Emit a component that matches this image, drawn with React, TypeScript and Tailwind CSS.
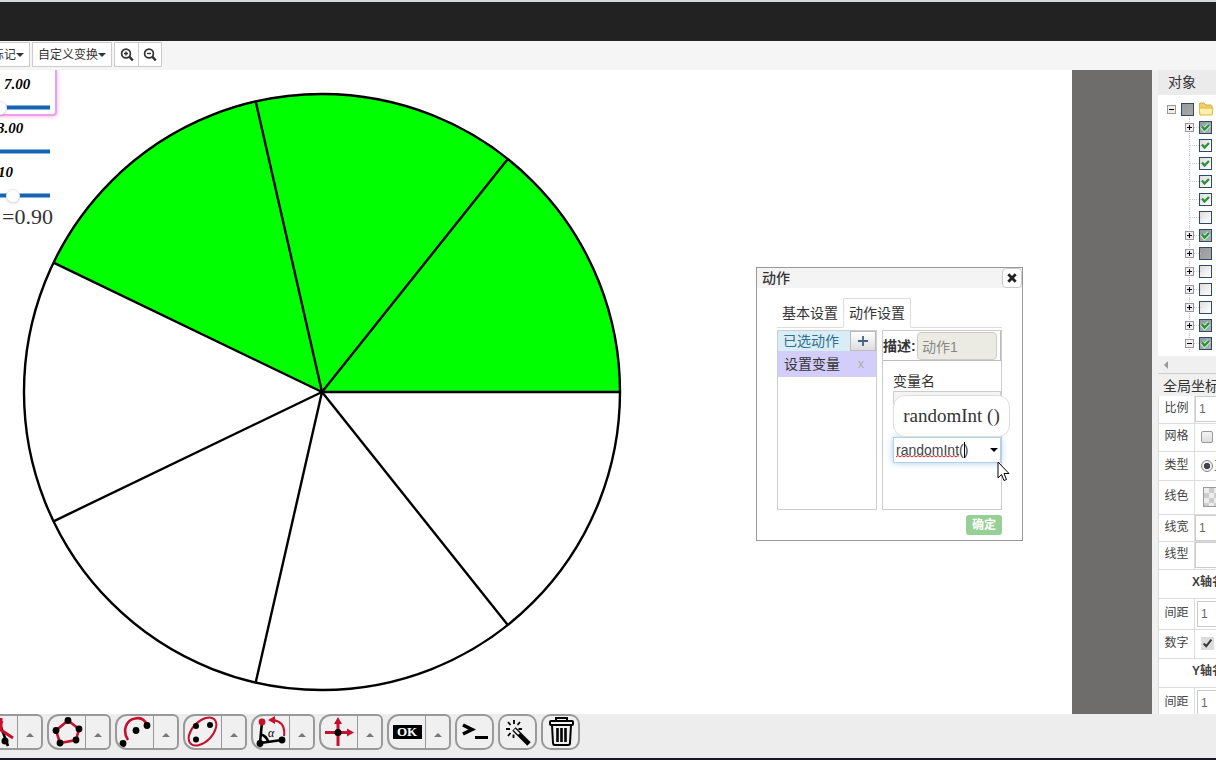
import type { ReactNode } from "react";

type NodeState = "checked" | "partial" | "mixed" | "empty";

interface TreeNode {
  state: NodeState;
  toggle?: "+" | "-";
}

const NODES: TreeNode[] = [
  { state: "mixed", toggle: "+" },
  { state: "checked" },
  { state: "checked" },
  { state: "checked" },
  { state: "checked" },
  { state: "empty" },
  { state: "mixed", toggle: "+" },
  { state: "partial", toggle: "+" },
  { state: "empty", toggle: "+" },
  { state: "empty", toggle: "+" },
  { state: "empty", toggle: "+" },
  { state: "mixed", toggle: "+" },
  { state: "mixed", toggle: "-" },
];

const CX = 322;
const CY = 322;
const R = 298;
const SLICES = 7;
const FILLED = 3;

function pointAt(index: number) {
  const angle = (2 * Math.PI * index) / SLICES;
  return { x: CX + R * Math.cos(angle), y: CY - R * Math.sin(angle) };
}

function PieChart() {
  const end = pointAt(FILLED);
  return (
    <svg className="absolute left-0 top-0" width="640" height="640" aria-hidden="true">
      <path d={`M${CX} ${CY} L${CX + R} ${CY} A${R} ${R} 0 0 0 ${end.x} ${end.y} Z`} fill="#00ff00" />
      <g fill="none" stroke="#000" strokeWidth="2.4">
        <circle cx={CX} cy={CY} r={R} />
        {Array.from({ length: SLICES }, (_, i) => {
          const p = pointAt(i);
          return <line key={i} x1={CX} y1={CY} x2={p.x} y2={p.y} />;
        })}
      </g>
    </svg>
  );
}

function Caret({ up = false, className = "" }: { up?: boolean; className?: string }) {
  return (
    <svg width="8" height="4" viewBox="0 0 8 4" className={className} aria-hidden="true">
      <path d={up ? "M0 4 4 0 8 4Z" : "M0 0H8L4 4Z"} fill="currentColor" />
    </svg>
  );
}

function ZoomIcon({ plus = false }: { plus?: boolean }) {
  return (
    <svg width="14" height="14" viewBox="0 0 14 14" fill="none" stroke="#333" aria-hidden="true">
      <circle cx="6" cy="5.5" r="4.4" strokeWidth="1.7" />
      <path d="M9.2 8.7 12.8 12.3" strokeWidth="2.4" />
      <path d={plus ? "M4 5.5H8M6 3.5V7.5" : "M4 5.5H8"} strokeWidth="1.4" />
    </svg>
  );
}

interface ParamSliderProps {
  label: string;
  text: string;
  value: number;
  textClass: string;
}

function ParamSlider({ label, text, value, textClass }: ParamSliderProps) {
  return (
    <div className="relative h-11 w-[100px]">
      <span
        className={`absolute top-1 font-['Liberation_Serif',serif] text-[15px] leading-5 font-bold italic text-black ${textClass}`}
      >
        {text}
      </span>
      <input
        type="range"
        aria-label={label}
        defaultValue={value}
        className="absolute left-0 top-[30px] h-3.5 w-full appearance-none bg-transparent [&::-webkit-slider-runnable-track]:h-[5px] [&::-webkit-slider-runnable-track]:border-y [&::-webkit-slider-runnable-track]:border-[#7fb2e5] [&::-webkit-slider-runnable-track]:bg-[#1c62b0] [&::-webkit-slider-thumb]:-mt-[5px] [&::-webkit-slider-thumb]:size-3.5 [&::-webkit-slider-thumb]:appearance-none [&::-webkit-slider-thumb]:rounded-full [&::-webkit-slider-thumb]:border [&::-webkit-slider-thumb]:border-gray-200 [&::-webkit-slider-thumb]:bg-white [&::-webkit-slider-thumb]:shadow"
      />
    </div>
  );
}

function ActionDialog() {
  return (
    <section
      aria-label="动作"
      className="absolute left-[756px] top-[197px] w-[267px] border border-[#999] bg-white text-sm text-[#333]"
    >
      <header className="flex h-5 items-center justify-between bg-[#f4f4f4] pl-[5px]">
        <h2 className="font-medium leading-5">动作</h2>
        <button
          type="button"
          aria-label="关闭"
          className="flex size-5 items-center justify-center rounded border border-[#ccc] bg-white"
        >
          <svg width="10" height="10" viewBox="0 0 10 10" aria-hidden="true">
            <path d="M1.3 1.3 8.7 8.7M8.7 1.3 1.3 8.7" stroke="#222" strokeWidth="2.8" />
          </svg>
        </button>
      </header>
      <div className="px-5 pt-2.5 pb-[5px]">
        <div role="tablist" className="flex h-[30px] border-b border-[#ddd]">
          <button type="button" role="tab" aria-selected="false" className="h-[30px] w-[66px]">
            基本设置
          </button>
          <button
            type="button"
            role="tab"
            aria-selected="true"
            className="h-[30px] w-[68px] border border-b-white border-[#ddd] bg-white"
          >
            动作设置
          </button>
        </div>
        <div className="mt-0.5 flex h-[180px] gap-[5px]">
          <div className="w-[100px] border border-[#ccc]">
            <div className="flex h-5 bg-[#d9edf7] text-[#31708f]">
              <span className="flex-1 pl-[5px] leading-5">已选动作</span>
              <button
                type="button"
                aria-label="添加动作"
                className="flex w-[26px] items-center justify-center border border-[#bbb] bg-linear-to-b from-white to-[#ddd]"
              >
                <svg width="10" height="10" viewBox="0 0 10 10" aria-hidden="true">
                  <path d="M0 5H10M5 0V10" stroke="#3c6487" strokeWidth="1.8" />
                </svg>
              </button>
            </div>
            <div className="flex h-[26px] items-center justify-between bg-[#d3cdfa] pl-1.5 pr-3">
              <span>设置变量</span>
              <button type="button" aria-label="删除" className="text-xs text-[#aaa]">
                x
              </button>
            </div>
          </div>
          <div className="w-[120px] border border-[#ccc]">
            <div className="flex h-[30px] items-center border-b border-r border-[#bbb] pr-[3px]">
              <label htmlFor="action-desc" className="w-[34px] shrink-0 whitespace-nowrap font-bold">
                描述:
              </label>
              <input
                id="action-desc"
                defaultValue="动作1"
                disabled
                className="h-7 w-full min-w-0 rounded border border-[#ccc] bg-[#ebebe4] px-1 text-[#888]"
              />
            </div>
            <div className="pl-2.5 pt-2.5">
              <label htmlFor="variable-name" className="block leading-5">
                变量名
              </label>
              <input id="variable-name" className="h-6 w-full border border-[#ccc] bg-[#f4f4f4]" />
              <div className="relative mt-[22px]">
                <input
                  aria-label="变量值"
                  defaultValue="randomInt()"
                  className="h-[26px] w-full border border-[#b5cfe4] px-0.5 text-[#444] shadow-[0_0_7px_#a5cff0] outline-none"
                />
                <svg className="absolute left-[3px] top-[18px]" width="63" height="3" aria-hidden="true">
                  <path
                    d={"M0 2" + Array.from({ length: 16 }, () => "l2-1.5l2 1.5").join("")}
                    fill="none"
                    stroke="#d22"
                  />
                </svg>
                <span className="absolute left-[71px] top-[5px] h-4 w-px bg-black" />
                <Caret className="absolute right-[3px] top-[11px] text-black" />
                <output className="absolute -top-[42px] left-0 h-[42px] w-[117px] rounded-xl border border-[#ddd] bg-white text-center font-['Liberation_Serif',serif] text-[19px] leading-10">
                  randomInt ()
                </output>
              </div>
            </div>
          </div>
        </div>
        <div className="mt-[5px] flex justify-end">
          <button type="button" className="h-5 w-9 rounded-[3px] bg-[#96d096] text-xs font-bold text-white">
            确定
          </button>
        </div>
      </div>
    </section>
  );
}

interface ToolGroupProps {
  name: string;
  children: ReactNode;
  className?: string;
}

function ToolGroup({ name, children, className = "" }: ToolGroupProps) {
  return (
    <div
      className={`flex h-9 w-16 shrink-0 overflow-hidden rounded-l-xl rounded-r-md border-2 border-[#999] bg-[#f0f0f0] ${className}`}
    >
      <button
        type="button"
        aria-label={name}
        className="flex w-[37px] items-center justify-center border-r border-[#999]"
      >
        {children}
      </button>
      <button type="button" aria-label={`${name}菜单`} className="flex flex-1 items-center justify-center pt-1.5">
        <Caret up className="text-[#777]" />
      </button>
    </div>
  );
}

function ToolButton({ name, children }: { name: string; children: ReactNode }) {
  return (
    <button
      type="button"
      aria-label={name}
      className="flex h-9 w-[39px] shrink-0 items-center justify-center rounded-[10px] border-2 border-[#999] bg-[#f0f0f0]"
    >
      {children}
    </button>
  );
}

function BottomTools() {
  return (
    <footer className="flex h-[46px] shrink-0 gap-1 overflow-hidden border-b-2 border-[#181820] bg-[#ededed]">
      <ToolGroup name="点" className="-ml-[21px]">
        <svg width="32" height="32" viewBox="0 0 32 32" aria-hidden="true">
          <path d="M18 11 25 30" stroke="#000" strokeWidth="2.6" />
          <path d="M18 2V14L30 22M19 5 11 26" stroke="#c8102e" strokeWidth="3" fill="none" />
          <circle cx="22" cy="25" r="3.5" />
        </svg>
      </ToolGroup>
      <ToolGroup name="多边形">
        <svg width="32" height="32" viewBox="0 0 32 32" aria-hidden="true">
          <path d="M17 4.500 28 13 25 24 9 27 5 14.500Z" stroke="#c8102e" strokeWidth="2.6" fill="none" />
          <circle cx="17" cy="4.500" r="3.400" />
          <circle cx="28" cy="13" r="3.400" />
          <circle cx="25" cy="24" r="3.400" />
          <circle cx="9" cy="27" r="3.400" />
          <circle cx="5" cy="14.500" r="3.400" />
        </svg>
      </ToolGroup>
      <ToolGroup name="圆弧">
        <svg width="32" height="32" viewBox="0 0 32 32" aria-hidden="true">
          <path d="M9 24C3 15 7 4 16 2.500C22 1 26 4 28 9" stroke="#c8102e" strokeWidth="2.6" fill="none" />
          <circle cx="28" cy="9.500" r="3.400" />
          <circle cx="17" cy="14.500" r="3.400" />
          <circle cx="4" cy="27.500" r="3.400" />
        </svg>
      </ToolGroup>
      <ToolGroup name="椭圆">
        <svg width="32" height="32" viewBox="0 0 32 32" aria-hidden="true">
          <ellipse
            cx="15.500"
            cy="15.500"
            rx="17"
            ry="10"
            transform="rotate(-46 15.500 15.500)"
            stroke="#c8102e"
            strokeWidth="2"
            fill="none"
          />
          <circle cx="9" cy="10" r="3" />
          <circle cx="23" cy="9" r="3" />
          <circle cx="9" cy="23.500" r="3" />
        </svg>
      </ToolGroup>
      <ToolGroup name="变换">
        <svg width="32" height="32" viewBox="0 0 32 32" aria-hidden="true">
          <path d="M7 6 5 27 27 24M5 18Q12 20 13 26" stroke="#000" strokeWidth="2.6" fill="none" />
          <circle cx="5" cy="27.500" r="3.400" />
          <circle cx="27" cy="24" r="3.400" />
          <circle cx="7" cy="6" r="3.400" fill="#c8102e" />
          <path d="M18 4Q31 6 29 20" stroke="#c8102e" strokeWidth="2" fill="none" />
          <path d="M13 4 20 0V8Z" fill="#c8102e" />
          <text x="13" y="21" fontSize="12" fontStyle="italic" fontFamily="Liberation Serif">
            α
          </text>
        </svg>
      </ToolGroup>
      <ToolGroup name="坐标系">
        <svg width="32" height="32" viewBox="0 0 32 32" aria-hidden="true">
          <path d="M2 16.500H26M15 30V6" stroke="#c8102e" strokeWidth="3" />
          <path d="M24 12.500 31 16.500 24 20.500ZM11 8 15 1 19 8Z" fill="#c8102e" />
          <circle cx="15" cy="16.500" r="3.500" />
        </svg>
      </ToolGroup>
      <ToolGroup name="确认按钮">
        <span className="h-3.5 w-[29px] bg-black text-center font-['Liberation_Serif',serif] text-[13px] leading-3.5 font-bold text-white">
          OK
        </span>
      </ToolGroup>
      <ToolButton name="命令行">
        <svg width="28" height="28" viewBox="0 0 28 28" fill="none" stroke="#000" aria-hidden="true">
          <path d="M2 7 11 11.500 2 16" strokeWidth="3.6" />
          <path d="M14 19.500H27" strokeWidth="3" />
        </svg>
      </ToolButton>
      <ToolButton name="魔棒">
        <svg width="28" height="28" viewBox="0 0 28 28" fill="none" stroke="#000" aria-hidden="true">
          <path d="M10 11 25 26" strokeWidth="4.8" />
          <path d="M10.500 11.500 15 16" strokeWidth="2.4" stroke="#eee" />
          <path
            d="M10 2V6M4 4 6.500 7M16 4 13.500 7M2 11H6M14.500 11H18M4 18 6.500 15M9.500 16.500V20"
            strokeWidth="1.8"
          />
        </svg>
      </ToolButton>
      <ToolButton name="删除">
        <svg width="28" height="32" viewBox="0 0 28 32" fill="none" stroke="#000" strokeWidth="2" aria-hidden="true">
          <path d="M9 5V2H20V5" />
          <rect x="3" y="5" width="23" height="4" rx="1" />
          <path d="M5 9 6 27Q6 29 8 29H21Q23 29 23 27L24 9" />
          <path d="M10.500 12V26M14.500 12V26M18.500 12V26" strokeWidth="2.6" />
        </svg>
      </ToolButton>
    </footer>
  );
}

function Toggle({ sign }: { sign: "+" | "-" }) {
  return (
    <button
      type="button"
      aria-label={sign === "+" ? "展开" : "折叠"}
      className="relative size-[9px] border border-[#999] bg-[#eee]"
    >
      <svg width="7" height="7" viewBox="0 0 7 7" aria-hidden="true">
        <path d={sign === "+" ? "M1 3.500H6M3.500 1V6" : "M1 3.500H6"} stroke="#000" />
      </svg>
    </button>
  );
}

function NodeCheckbox({ state }: { state: NodeState }) {
  const ticked = state === "checked" || state === "mixed";
  const fill = {
    checked: "from-[#ddd] to-white",
    empty: "from-[#ddd] to-white",
    mixed: "from-[#8f9aa0] to-[#a8b4ba]",
    partial: "from-[#999] to-[#aaa]",
  }[state];
  return (
    <span className="grid size-[13px] shrink-0 *:[grid-area:1/1]">
      <input
        type="checkbox"
        aria-label="显示对象"
        defaultChecked={ticked}
        className={`size-[13px] appearance-none border border-[#2f4a66] bg-linear-to-br ${fill}`}
      />
      {ticked && (
        <svg width="13" height="13" viewBox="0 0 13 13" fill="none" className="relative" aria-hidden="true">
          {state === "mixed" && <path d="M3 6 5.500 8.500 10 4" stroke="#c9efc9" strokeWidth="4.5" />}
          <path d="M3 5.500 5.500 8.500 10 4" stroke="#2f8f3a" strokeWidth="2.4" />
        </svg>
      )}
    </span>
  );
}

function ObjectTree() {
  return (
    <div className="h-[261px] overflow-hidden bg-white pt-[5px] pl-[9px]">
      <div className="flex h-[18px] items-center gap-[5px]">
        <Toggle sign="-" />
        <NodeCheckbox state="partial" />
        <svg width="16" height="14" viewBox="0 0 16 14" className="shrink-0" aria-hidden="true">
          <path d="M0 3Q0 1 2 1H5L7 3H12Q13 3 13 5V12H1Z" fill="#f0cf67" stroke="#d2a93e" />
          <path d="M0 6H14L13 13H1Z" fill="#fff0a5" stroke="#d9b64f" />
        </svg>
      </div>
      <ul className="pl-[18px]">
        {NODES.map((node, index) => (
          <li key={index} className="relative flex h-[18px] items-center">
            <span className="absolute top-0 left-1 h-full border-l border-dotted border-[#ccc]" />
            <span className="absolute top-[9px] left-1 w-3 border-t border-dotted border-[#ccc]" />
            <span className="flex w-[14px]">{node.toggle && <Toggle sign={node.toggle} />}</span>
            <NodeCheckbox state={node.state} />
          </li>
        ))}
      </ul>
    </div>
  );
}

interface PropertyRowProps {
  label: string;
  height: string;
  children: ReactNode;
}

function PropertyRow({ label, height, children }: PropertyRowProps) {
  return (
    <tr className={`border-b border-[#ddd] ${height}`}>
      <th scope="row" className="w-9 border-x border-[#ddd] px-0 pt-0 pb-0.5 text-center font-normal">
        {label}
      </th>
      <td className="p-0">{children}</td>
    </tr>
  );
}

function NumberField({ label, value }: { label: string; value: string }) {
  return (
    <input
      aria-label={label}
      defaultValue={value}
      className="block h-[26px] w-full border border-[#ccc] bg-white px-[3px] text-[#666]"
    />
  );
}

function PropertyTable() {
  return (
    <table className="w-60 table-fixed border-collapse bg-white text-xs text-[#444]">
      <tbody>
        <PropertyRow label="比例" height="h-[27px]">
          <NumberField label="比例" value="1" />
        </PropertyRow>
        <PropertyRow label="网格" height="h-7">
          <input
            type="checkbox"
            aria-label="网格"
            className="ml-1.5 block size-3 appearance-none rounded-xs border border-[#999] bg-linear-to-b from-[#f4f4f4] to-[#ddd]"
          />
        </PropertyRow>
        <PropertyRow label="类型" height="h-[29px]">
          <label className="flex items-center gap-px pl-1.5">
            <input
              type="radio"
              name="axis-type"
              defaultChecked
              className="size-3 shrink-0 appearance-none rounded-full border border-[#888] bg-[radial-gradient(#444_40%,#eee_50%)]"
            />
            直角坐标
          </label>
        </PropertyRow>
        <PropertyRow label="线色" height="h-[34px]">
          <button
            type="button"
            aria-label="线色"
            className="ml-2 block size-5 border border-[#999] bg-[conic-gradient(#ccc_25%,#eee_0_50%,#ccc_0_75%,#eee_0)] bg-size-[10px_10px]"
          />
        </PropertyRow>
        <PropertyRow label="线宽" height="h-[27px]">
          <NumberField label="线宽" value="1" />
        </PropertyRow>
        <PropertyRow label="线型" height="h-7">
          <select aria-label="线型" className="block h-[26px] w-full appearance-none border border-[#ccc]">
            <option> </option>
          </select>
        </PropertyRow>
        <tr className="h-[29px] border border-[#ddd]">
          <th colSpan={2} className="p-0 pb-1 pl-[33px] text-left font-bold">
            X轴名称
          </th>
        </tr>
        <PropertyRow label="间距" height="h-[31px]">
          <div className="pl-0.5">
            <NumberField label="X轴间距" value="1" />
          </div>
        </PropertyRow>
        <PropertyRow label="数字" height="h-[29px]">
          <input
            type="checkbox"
            aria-label="数字"
            defaultChecked
            className="ml-1.5 block size-[13px] accent-[#ddd]"
          />
        </PropertyRow>
        <tr className="h-[29px] border border-[#ddd]">
          <th colSpan={2} className="p-0 pb-1 pl-[33px] text-left font-bold">
            Y轴名称
          </th>
        </tr>
        <PropertyRow label="间距" height="h-[31px]">
          <div className="pl-0.5">
            <NumberField label="Y轴间距" value="1" />
          </div>
        </PropertyRow>
      </tbody>
    </table>
  );
}

export default function App() {
  return (
    <div className="flex h-screen flex-col overflow-hidden bg-white font-['Liberation_Sans','Noto_Sans_CJK_SC',sans-serif] text-[#333]">
      <div className="h-[41px] shrink-0 border-t-2 border-[#d5d9dc] bg-[#222]" />
      <nav className="flex h-[29px] shrink-0 items-start overflow-hidden bg-[#f5f5f5] pt-px text-xs">
        <button
          type="button"
          className="-ml-3.5 mr-0.5 flex h-[25px] items-center border border-[#ccc] bg-white px-[5px]"
        >
          标记
          <Caret />
        </button>
        <button
          type="button"
          className="mr-0.5 flex h-[25px] items-center border border-[#ccc] bg-white px-[5px]"
        >
          自定义变换
          <Caret />
        </button>
        <button
          type="button"
          aria-label="放大"
          className="flex h-[25px] w-[25px] items-center justify-center border border-[#ccc] bg-white"
        >
          <ZoomIcon plus />
        </button>
        <button
          type="button"
          aria-label="缩小"
          className="-ml-px flex h-[25px] w-6 items-center justify-center border border-[#ccc] bg-white"
        >
          <ZoomIcon />
        </button>
      </nav>
      <div className="flex min-h-0 flex-1">
        <main className="relative min-w-0 flex-1 overflow-hidden bg-white">
          <PieChart />
          <div className="absolute -left-[50px] top-0 grid auto-rows-[44px]">
            <div className="h-[46px] w-[107px] rounded-br border-r-2 border-b-2 border-[#f0a0e8] shadow-[0_0_4px_#f0a0e8]">
              <ParamSlider label="n" text="7.00" value={50} textClass="left-[54px]" />
            </div>
            <ParamSlider label="m" text="3.00" value={10} textClass="left-[47px]" />
            <ParamSlider label="k" text="10" value={65} textClass="left-[48px]" />
          </div>
          <span className="absolute left-0.5 top-[135px] font-['Liberation_Serif',serif] text-[22px] leading-6">
            =0.90
          </span>
          <ActionDialog />
          <svg className="absolute left-[997px] top-[391px]" width="13" height="20" viewBox="0 0 13 20" aria-hidden="true">
            <path d="M1 1V17L4.500 13.500 7 19.500 9.500 18.500 7 12.500H12Z" fill="#fff" stroke="#000" />
          </svg>
        </main>
        <div className="w-20 shrink-0 bg-[#6e6d6b]" />
        <aside className="w-16 shrink-0 overflow-hidden bg-[#f0f0f0] pl-1.5">
          <h2 className="h-[25px] bg-[#ebebeb] pl-2.5 text-sm leading-6">对象</h2>
          <ObjectTree />
          <div className="flex h-[18px] items-center border-b border-[#ccc] pl-1.5">
            <svg width="4" height="8" viewBox="0 0 4 8" aria-hidden="true">
              <path d="M4 0V8L0 4Z" fill="#999" />
            </svg>
          </div>
          <h2 className="h-[22px] overflow-hidden whitespace-nowrap pl-[5px] text-sm leading-6">全局坐标系</h2>
          <PropertyTable />
        </aside>
      </div>
      <BottomTools />
    </div>
  );
}
